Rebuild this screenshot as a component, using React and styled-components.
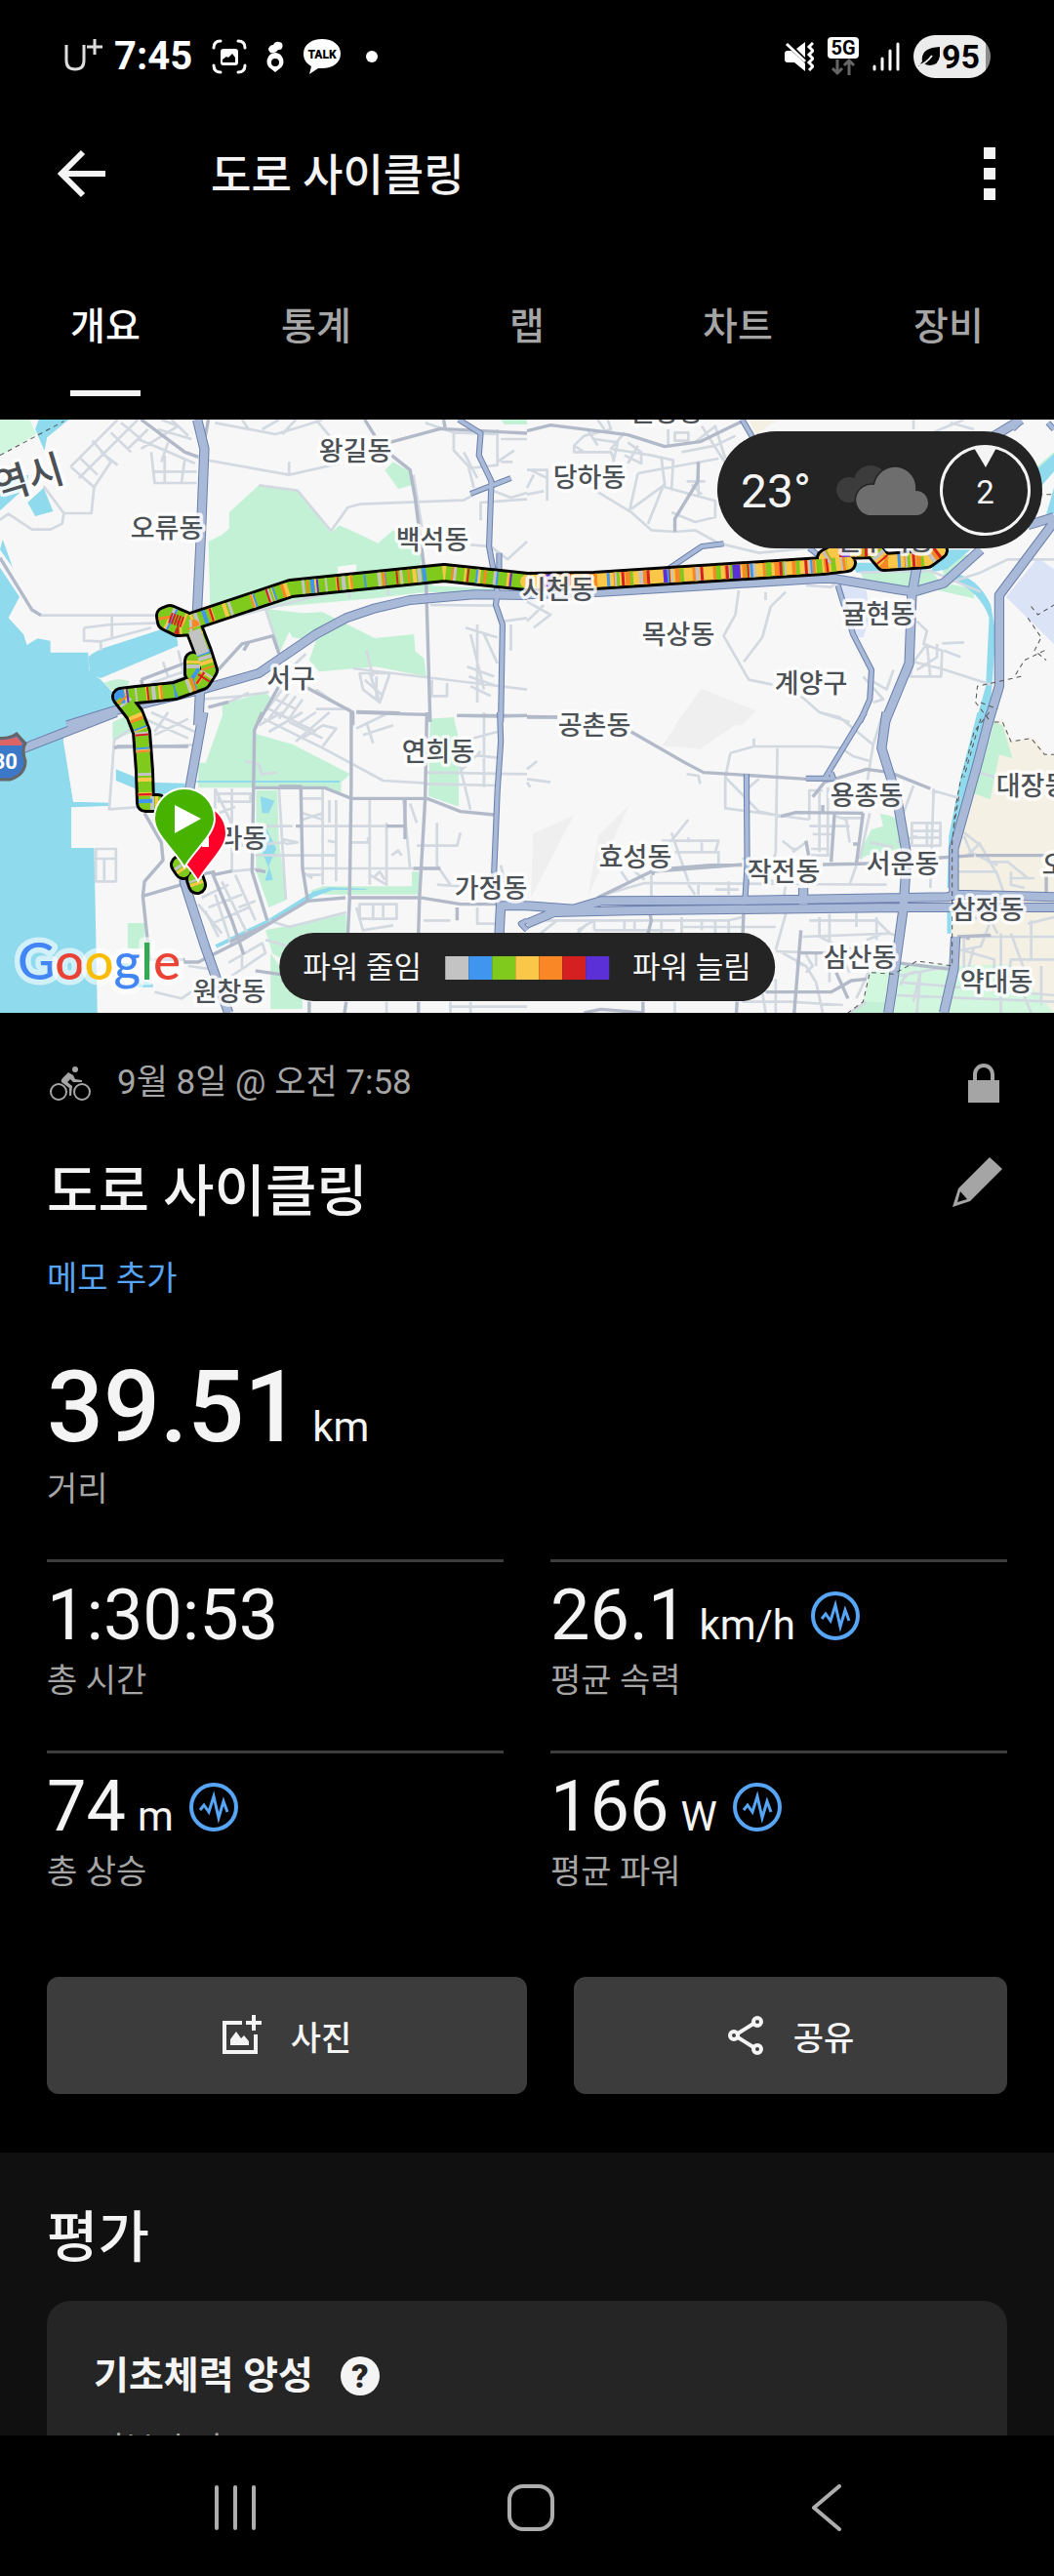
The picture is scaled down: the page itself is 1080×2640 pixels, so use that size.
import React, { useState } from "react";
import styled, { createGlobalStyle } from "styled-components";

const GlobalStyle = createGlobalStyle`
  * {
    box-sizing: border-box;
  }
  body {
    margin: 0;
    background: #000;
    color: #f4f4f4;
    font-family: Roboto, "Noto Sans CJK KR", sans-serif;
  }
  button {
    padding: 0;
    border: none;
    background: none;
    color: inherit;
    font-family: inherit;
  }
  h1, h2, h3, p {
    margin: 0;
    font-weight: 500;
  }
`;

const Screen = styled.div`
  display: flex;
  flex-direction: column;
  height: 100vh;
  background: #000;
`;

const StatusBar = styled.div`
  display: flex;
  justify-content: space-between;
  align-items: center;
  flex: none;
  height: 116px;
  padding: 0 65px;
`;

const StatusGroup = styled.div`
  display: flex;
  align-items: center;
  gap: ${props => props.gap}px;
`;

const Clock = styled.span`
  font-size: 40px;
  font-weight: 700;
  line-height: 48px;
  color: #fff;
`;

const NetworkBadge = styled.div`
  display: flex;
  flex-direction: column;
  align-items: center;
  width: 32px;
  height: 40px;
`;

const NetworkName = styled.span`
  width: 32px;
  border-radius: 4px;
  background: #fff;
  color: #000;
  font-size: 20px;
  font-weight: 700;
  line-height: 22px;
  text-align: center;
`;

const Battery = styled.div`
  display: flex;
  align-items: center;
  justify-content: center;
  gap: 2px;
  width: 79px;
  height: 44px;
  padding-right: 6px;
  border-radius: 22px;
  background: linear-gradient(90deg, #ececec 94%, #8c8c8c 94%);
  color: #000;
  font-size: 34px;
  font-weight: 700;
`;

const AppBar = styled.header`
  display: flex;
  align-items: center;
  flex: none;
  height: 124px;
  padding: 0 54px 0 48px;
`;

const IconButton = styled.button`
  display: flex;
  align-items: center;
  justify-content: center;
  flex: none;
  height: ${props => props.height || 72}px;
  width: ${props => props.width || 72}px;
`;

const AppTitle = styled.h1`
  flex: 1;
  margin-left: 96px;
  padding-top: 6px;
  font-size: 45px;
  line-height: 60px;
`;

const TabBar = styled.nav`
  display: flex;
  flex: none;
  height: 190px;
`;

const Tab = styled.button`
  flex: 1;
  display: flex;
  justify-content: center;
  align-items: flex-start;
  padding-top: 68px;
  color: ${props => (props.$active ? "#fff" : "#a5a5a5")};
  font-size: 39px;
  font-weight: 500;
  line-height: 54px;
`;

const TabLabel = styled.span`
  padding-bottom: 38px;
  border-bottom: 6px solid ${props => (props.$active ? "#f4f4f4" : "transparent")};
`;

const Content = styled.main`
  flex: 1;
  min-height: 0;
  overflow-y: auto;
  scrollbar-width: none;
`;

const MapBox = styled.div`
  position: relative;
  height: 608px;
  overflow: hidden;
`;

const MapSvg = styled.svg`
  display: block;
  width: 100%;
  height: 100%;
`;

const Weather = styled.div`
  position: absolute;
  top: 12px;
  right: 12px;
  display: flex;
  align-items: center;
  height: 120px;
  padding: 0 12px 0 24px;
  border-radius: 60px;
  background: #242424;
`;

const Temperature = styled.span`
  width: 96px;
  padding-top: 4px;
  font-size: 48px;
  line-height: 60px;
`;

const Wind = styled.div`
  position: relative;
  display: flex;
  align-items: center;
  justify-content: center;
  width: 93px;
  height: 93px;
  margin-left: 12px;
  padding-top: 4px;
  border: 3px solid #f4f4f4;
  border-radius: 50%;
  font-size: 33px;
`;

const WindArrow = styled.svg`
  position: absolute;
  top: 0;
  left: 32px;
`;

const Legend = styled.div`
  position: absolute;
  bottom: 12px;
  left: 50%;
  transform: translateX(-50%);
  display: flex;
  align-items: center;
  gap: 24px;
  height: 70px;
  padding: 2px 24px 0;
  border-radius: 35px;
  background: #242424;
  font-size: 31px;
  line-height: 42px;
  white-space: nowrap;
`;

const Swatches = styled.div`
  display: flex;
`;

const Swatch = styled.span`
  width: 24px;
  height: 24px;
  background: ${props => props.color};
`;

const Details = styled.section`
  padding: 48px 48px 60px;
`;

const Row = styled.div`
  display: flex;
  align-items: center;
  gap: 24px;
`;

const DateText = styled.span`
  flex: 1;
  color: #a5a5a5;
  font-size: 35px;
  line-height: 48px;
`;

const TitleRow = styled.div`
  display: flex;
  justify-content: space-between;
  align-items: flex-start;
  margin-top: 52px;
`;

const Title = styled.h2`
  font-size: 57px;
  line-height: 72px;
`;

const MemoLink = styled.a`
  display: block;
  width: max-content;
  margin-top: 28px;
  color: #57a5f5;
  font-size: 34px;
  line-height: 48px;
  text-decoration: none;
`;

const Distance = styled.p`
  display: flex;
  align-items: baseline;
  gap: 12px;
  margin-top: 48px;
  font-size: 102px;
  line-height: 120px;
`;

const Unit = styled.span`
  font-size: 42px;
  font-weight: 400;
  line-height: 48px;
`;

const Label = styled.p`
  color: #a5a5a5;
  font-size: 34px;
  font-weight: 400;
  line-height: 48px;
`;

const StatGrid = styled.div`
  display: grid;
  grid-template-columns: 1fr 1fr;
  gap: 48px;
  margin-top: 48px;
`;

const Stat = styled.div`
  padding-top: 13px;
  border-top: 3px solid #3c3c3c;
`;

const StatRow = styled.div`
  display: flex;
  align-items: center;
  gap: 16px;
`;

const StatValue = styled.span`
  display: flex;
  align-items: baseline;
  gap: 12px;
  font-size: 72px;
  line-height: 84px;
`;

const Actions = styled.div`
  display: grid;
  grid-template-columns: 41fr 37fr;
  gap: 48px;
  margin-top: 84px;
`;

const ActionButton = styled.button`
  display: flex;
  align-items: center;
  justify-content: center;
  gap: 28px;
  height: 120px;
  border-radius: 12px;
  background: #3c3c3c;
  font-size: 34px;
  font-weight: 500;
`;

const Evaluation = styled.section`
  padding: 52px 48px 48px;
  background: #101010;
`;

const Card = styled.div`
  margin-top: 28px;
  padding: 50px 48px;
  border-radius: 24px;
  background: #252525;
`;

const CardTitle = styled.h3`
  font-size: 39px;
  font-weight: 700;
  line-height: 54px;
`;

const HelpButton = styled.button`
  width: 40px;
  height: 40px;
  margin-left: 4px;
  border-radius: 50%;
  background: #f4f4f4;
  color: #252525;
  font-size: 34px;
  font-weight: 900;
  line-height: 40px;
`;

const CardLabel = styled(Label)`
  margin-top: 24px;
`;

const NavBar = styled.nav`
  display: flex;
  flex: none;
  height: 144px;
  padding: 4px 82px 0 90px;
`;

const NavButton = styled.button`
  flex: 1;
  display: flex;
  align-items: center;
  justify-content: center;
`;

/* ---------- map data ---------- */

// The map is drawn in four tiles, each with its own grid.
const tiles = {
  tl: "translate(0 -10) scale(.3444 .3333)",
  tr: "translate(540 -10) scale(.3444 .3333)",
  bl: "translate(0 300) scale(.3444 .3333)",
  br: "translate(540 300) scale(.3444 .3333)",
};

const land = [
  ["tl", "#d2f7df", "M0 30H88L108 75 0 140Z"],
  ["tl", "#90daee", "M115 30H205L140 85 132 125 105 60ZM0 215L85 200 80 235 0 310ZM82 285L130 240 158 312 105 327ZM8 398L38 485 0 430ZM0 485L58 575 25 640 70 690 80 723 112 703 150 710V746H262L265 800 300 830 345 880 340 930 200 970H0Z"],
  ["tl", "#90daee", "M262 760Q290 735 330 725L480 675 525 690 530 725 300 825 268 812Z"],
  ["tl", "#c3f1d5", "M770 232L885 248 985 378 1010 355 1085 390 1125 410 1170 370 1260 440 1240 520 1290 540 1270 560 1110 580 780 610 625 600 620 405 660 385 682 365V315ZM1145 185L1170 160 1218 190 1225 232 1185 243ZM1490 30H1568V45H1500ZM310 840Q350 820 385 835L375 860 330 860ZM660 905L790 868 805 885 760 970H665ZM790 612L900 625 960 622 1115 702 1232 690 1235 742 1262 765 1268 820 1118 790 950 805 920 770 940 710 870 700 860 680 880 640 830 750ZM1268 540L1470 550V570L1268 560ZM1280 950H1350V970H1280Z"],
  ["tl", "#f7f7f7", "M1005 482L1060 475V510H1005ZM1088 370H1160L1125 408Z"],
  ["tr", "#f5f0e4", "M660 30H750L680 75Z"],
  ["tr", "#dbe3f7", "M920 535L1010 555 1020 640 1000 700H970ZM1425 575L1520 455 1568 490V720Z"],
  ["tr", "#c3f1d5", "M990 490H1200L1230 530 1330 550V580L1200 550H1010ZM1230 455L1350 440 1280 510 1240 510ZM1500 190L1568 130V150L1520 200Z"],
  ["tr", "#90daee", "M965 470H1080L1200 480 1180 500 980 500ZM1568 135V190L1530 235 1500 200ZM1230 430H1320L1250 490 1200 500ZM1545 320L1568 240V320ZM1260 500Q1340 510 1380 600L1395 690 1375 960H1335L1365 850 1375 640Q1350 560 1260 520Z"],
  ["tr", "#efefef", "M518 857L682 925 640 970H440Z"],
  ["bl", "#90daee", "M0 0H340L188 75 218 275 325 278V288L212 295V415H280L290 924H0ZM345 175L440 215 550 218V245L450 255 345 210V280Z"],
  ["bl", "#f7f7f7", "M188 85L330 30V275L218 275ZM212 292L330 288 430 300 500 430 540 570 640 924H290V417H212Z"],
  ["bl", "#c3f1d5", "M335 30L400 0V60L335 85ZM665 0H785L757 60V65L870 98 1042 190 1015 215V250L965 232H590V155H612ZM762 240H825L830 400 855 575 800 600 762 490ZM1280 20L1350 15 1365 80V290L1275 258ZM920 550L960 535H1225V490H1248V560H970ZM380 648H430V700H450V726H380ZM790 670L1030 620V680H900L840 760 810 740ZM805 740L900 880V912H805Z"],
  ["bl", "#90daee", "M585 210H1010V216H585ZM775 258L817 272 800 310H780ZM790 350L822 420 800 470 812 515 788 518 800 480 776 420ZM400 820L455 835V845H410ZM360 770L400 775V785H370Z"],
  ["bl", "#90daee", "M640 715L800 635 930 552 980 538 1090 542V546L990 546 935 568 810 645 645 725Z"],
  ["br", "#efefef", "M470 0H675L515 113 402 103ZM18 372L138 318 12 570ZM212 378L303 286 182 565Z"],
  ["br", "#f5f0e4", "M1410 20L1440 90 1510 80 1545 130H1568V924H1320L1265 780 1270 400 1330 250 1390 30Z"],
  ["br", "#d2f7df", "M1020 800L1120 770 1265 780 1440 775 1568 924H975L1000 890Z"],
  ["br", "#c3f1d5", "M1050 312L1080 318 1105 330 1110 420 1010 440 990 455 1000 410 1025 360 1060 350ZM1390 30L1415 40 1445 142 1405 130 1378 268 1330 250ZM1000 890L1070 892V924H970Z"],
  ["br", "#90daee", "M1340 0H1365L1310 240 1265 400V540H1250L1255 380 1290 200ZM1250 600H1262V680H1250Z"],
];

const minor = {
  tl: "M210 175L280 238 272 318H190L130 235M190 318L185 350 150 368H95L25 320 0 338M210 175L350 30M235 210L410 30M275 95L330 160 280 238M240 150L290 200M300 130L350 170M330 70L390 130M440 60L380 120M360 40L420 90M410 90L480 120 580 165M450 130L460 225H585M460 190H585M490 140V225M550 150L540 225M500 100L480 160M420 120L530 50M530 50L480 30M470 60L570 90M510 30L560 80M640 40L820 75 900 50 960 30M720 30L740 60M780 60L830 30M840 75L880 30M940 30L980 80M590 150L860 200 1010 165M860 200V160M770 232L885 248 985 372 1035 300 1070 290 1380 278 1410 260M1230 200L1255 360M1120 80L1170 140M1265 40L1350 70 1480 75M1350 70V125L1400 180M1480 60V170L1395 180 1410 240M1380 130L1420 210M1480 160L1530 125M1490 90H1568M1490 160H1525M1470 250L1520 270 1568 255M1430 340V285L1568 275M1280 600L1470 602M1400 415L1460 420 1510 460 1568 405M250 670L330 660 480 655M250 670V710L300 712 450 670M333 630V700M120 632H480M300 712V740M610 660L790 612 990 560M790 612L830 740M530 740L555 850M485 775L500 820M430 860L620 800M450 840L560 800M600 890L720 880 800 868M620 915L690 895 740 870M840 860L780 940M860 870L800 950M880 880L830 950M900 890L860 950M820 890L880 920M800 920L860 950M940 920H1040M940 860L1010 910M1050 795L1568 860M1090 740L1110 820M1070 810H1160L1130 900 1080 860ZM1085 830L1140 880M1100 810L1130 900M1120 820V890M1385 670L1480 700M1400 690L1440 860M1420 660V900M1440 690L1480 780M1390 790L1470 820M1395 820L1480 850M1400 850L1460 880M1285 830V880H1330V840M1520 660V740M1500 650L1568 640M1040 560V580M1155 550V570M910 750L860 800",
  tr: "M140 110L170 80 250 60 240 30M170 130L140 110V130H250L260 160M200 90L270 100 250 190M210 30L230 60M180 60L210 110M290 70L250 120 370 140 435 155 430 250M300 100L340 130V165L290 140M330 110L300 165M420 60V110M440 70H480V95H440ZM400 150L410 230 310 305M500 100L560 50 590 150M520 50L600 180M460 130L560 110 620 80M330 195L570 150M330 195L305 310M405 235L360 350M400 235L560 280V330L500 345 430 315M190 240L310 315 370 370 440 375 500 370 570 410 690 440 840 425M475 220H530M510 165V270M490 230L520 260M0 185L60 185V280M0 260L50 250M20 200L0 240M10 185L60 210M0 590L70 630 20 670M0 650L50 600M630 555L620 630 585 695 660 830 730 845M815 880L870 930 960 960M770 560L725 605 700 700 645 775M710 560V585M830 540L905 545 920 530M1160 650L1190 680 1180 720 1235 740 1232 820H1140L1150 775 1230 795 1380 845M1190 720L1150 775M1235 718L1300 715M1240 740L1290 760M1190 720L1200 820M1220 720V760L1160 800M1000 820L1060 890 1030 900M1020 830L1070 860 1090 800M990 500L1200 495 1350 560M1200 550L1350 500 1430 460 1568 460M1150 60V30M1160 90L1230 60 1300 30M1260 40L1330 60",
  bl: "M340 85L325 298 430 290M340 85L400 45M335 110L580 100M430 20L560 80M450 0L580 60M460 70L560 20M500 0L460 60M640 235L720 410 850 400M640 235V340M650 250H745V275H650ZM690 235V490M600 330L700 290M680 490L780 480M760 350H870M760 440H1000M830 235L850 575M960 235V530M895 265L960 265M895 350H1200M895 440H960M900 480L1310 480M1000 270V520M1100 265V530M1150 340V530L1100 500M1200 265L1220 480M980 270V340M1040 400H1095V385M840 390L885 400 850 405M900 310L960 330M900 330L960 310M975 395L1000 400M900 500H955M905 495L930 510M1165 440L1185 425 1195 440M1110 510L1130 490 1145 515M785 20L960 110 1140 210 1270 218M770 40L840 0M800 60L900 0M880 40L940 0M900 80L960 40 1000 50 960 105M880 90L980 0M860 30L960 80M820 0L940 60M1060 50L1160 0M1080 70L1170 40M1090 30L1110 95M730 150L770 160 780 190 825 185M1270 185L1568 190M1270 220L1480 225M1360 130L1400 300M1400 130L1480 140M1440 0V230M1370 90L1480 60M1370 180L1430 120M1220 280L1240 340M1240 410H1360L1370 370M1300 340V470L1340 530M1300 530L1440 540M1490 470L1510 560M285 420H345V520H285ZM285 450H345M310 450V520M600 570L680 530M620 600L720 560M630 650L740 600M590 590L660 680M660 520L740 690M700 500L760 640M680 770L780 710 790 740 690 810M790 700L860 720 850 760M720 740V790M460 860L540 880 640 810M630 790L560 780M1070 590H1180V635H1070ZM1110 590V640M1140 590V630M1060 600L1080 670 1170 655M1260 640H1340M1420 600V650H1480M800 640L860 660 1030 615M920 924V890M1150 924V890M1340 924V890M1400 890V924M1340 905H1568M710 600L760 580M640 560L690 720M610 610L650 690",
  br: "M0 175L30 150M0 205L70 215M0 215L10 230M475 190L510 195 515 220M605 125L675 105H870L935 110 970 135 1020 150M605 125L590 200V295L700 310 840 330M590 200L690 305 760 320M745 110L740 430 730 480M675 105V80M870 0L930 15 1030 100 1005 260M1030 100L1060 0M690 205L650 240M760 395L790 420 810 420M790 430L830 400M480 330L430 395 410 400M430 370L480 520M400 395H570L560 430H460M440 430H570V480M520 400V430M480 385V400M640 450H720M740 430L720 500M280 490L300 520M310 480L350 515M230 560L350 525 1070 530M510 525V560M480 530L500 560M370 500V590M560 545H630M600 520V560M700 510L770 530 760 590M840 330V240L880 240M870 235V430M895 230V440M840 350H960M850 375H910M845 420H900M845 440H900M920 320L950 330 960 400M930 325H1000M1020 310L990 450M960 530L980 470M1020 400L1090 415M1150 225L1120 310M1210 235L1200 540M1205 240L1290 265M1145 340H1230V410H1145ZM1145 365H1230M1145 385H1230M1190 340V410M1100 400L1160 380M1300 370L1350 410 1400 500 1420 560M1300 380L1320 430 1400 470M1350 400L1310 440M1280 490L1400 490M1370 460H1430L1490 510M1440 490V530L1480 540M1440 510H1510M0 640H60L160 640H600L640 630M40 680L90 640M150 670L200 640V670M180 650L150 680M200 670H440M290 640V670M320 640V670M400 640V680M460 630V680M460 660H740M520 635V670M560 640V680M600 640V680M740 600L770 620 740 730M870 630V690L910 710M820 690L1080 680 1110 690M900 620V830M980 610V660M840 640H1040L1080 680M1040 630V700M1060 680L1010 700M740 735L880 740 1000 720M690 790V830M640 890H800M740 820V924M760 740L830 780 860 830 880 924M830 745L850 780 830 800M860 740V780M930 740L960 800M800 770L830 780M440 890V924M700 860L710 924M780 890L940 900M960 924L1010 890M1020 790L980 880M1110 810L1260 780M1110 830L1568 870M1100 870L1568 890M1110 840Q1130 790 1170 800L1150 890M1290 690H1568M1300 690V790M1320 630L1380 640 1350 720 1300 730M1380 640L1400 680M1290 730L1390 760 1390 790M1410 680V924M1440 680L1500 850M1500 640V760H1440L1430 830M1490 650L1568 630M1530 780V900M1480 760L1568 760M1330 720L1310 800M1470 850L1500 924M1335 180L1390 200M1170 800L1160 924",
};

const arterial = {
  tl: "M420 30L550 130 590 145M1085 30L1115 80M1160 100L1310 58 1568 72M1165 140L1220 185 1235 270 1255 430 1268 540 1280 960M0 455L95 615 122 632M620 30L600 140M640 810L720 720 812 695 830 750M420 830L560 775M420 830L430 870M620 915L680 898M725 740L740 715M830 850L770 960M905 850L1050 930V970M1060 928L1190 932M1190 935L1275 937M1360 940H1568M1320 30L1325 60",
  tr: "M0 65L70 47 300 77 410 113 515 98 640 35M510 160L508 220 440 335V375M0 943L90 945",
  bl: "M430 310L480 400 485 455 430 520 425 565 540 530M425 565L445 760H550M545 768H590L720 700 915 580 1028 570M780 0L757 55 750 490 795 640M757 232H965L1045 265H1270L1370 305 1470 315M830 228H895L900 480 915 575M1045 0V220L1040 580 1035 680M1060 0L1190 5M1360 10L1480 12 1568 10M1270 0L1265 265 1248 570 1245 680M1040 570H1250L1370 590 1490 590M1205 265V390M1150 350H1205M880 350H895M340 110L350 105 560 105M630 490L690 640 725 745M540 510L640 490M635 500L690 488M685 705L800 650M760 795L860 810 840 830M920 890V924M1030 890L1025 924M1245 890V924M1360 600V640M760 485L790 490M1230 480H1310M0 924",
  br: "M0 15H90M310 60L470 155 525 185 830 205 920 210M850 260L885 215 1010 175 1080 185 1200 235M755 320L800 308 1000 310M1000 310L980 465M915 310L905 460M830 395L838 440M880 285V310M970 405H985M360 590L370 640 360 680M645 600L642 680M375 500V480M430 480L545 470H640M545 470H640M210 570L370 490 640 468M880 468L1020 465M1190 450L1330 440M1335 440H1568M1545 500V560M1280 690L1380 685M1312 690V700M1100 770L1260 790M710 860H905L965 825 1010 820M815 670L795 924M920 800L955 880M810 740H880M345 890V924M625 890L623 924M0 924M170 924L220 913 345 924",
};

const highwayWide = {
  tl: "M587 30L608 120 598 380 585 650M595 870L590 970M200 970L340 925 600 860 770 810 940 690 1030 640 1110 612 1220 585 1410 568 1568 570",
  tr: "M0 568L220 560 540 540 880 518 920 520 1100 552 1150 560 1240 533 1350 430M1160 480L1145 570 1137 780 1065 960M1568 345L1405 570V850L1370 970M1490 355L1568 330M1390 80L1470 30",
  bl: "M605 0L565 230 555 400 548 520 560 560 610 720 680 924M60 115L345 0M1490 590L1485 690M1490 595H1568",
  br: "M0 595L140 605 220 580 650 578 1250 568 1280 560 1568 568M0 650L80 615 300 610 1110 600H1568M1070 0L1055 110 1100 260 1130 440 1120 600 1085 860 1075 924M1380 0L1340 160 1270 420V560M1275 690L1270 790 1240 924M822 540V590",
};

const highwayThin = {
  tl: "M1365 30L1430 72 1425 140 1462 220 1455 420 1480 560 1475 600 1495 660 1490 960M1400 258L1520 210M1485 440V500",
  tr: "M640 30L680 100 720 200M420 490L520 420 585 412M840 425L870 450M925 540L970 690 1025 800 1020 890 990 960M1445 60L1470 35M1550 40L1568 60",
  bl: "M1487 0L1490 90 1480 240 1470 490 1485 600M1568 640L1550 650 1568 670",
  br: "M1005 0L885 205M830 203H915M653 190L655 470 648 590M905 185L912 205",
};

const borders = {
  tl: "M0 140L190 35",
  tr: "M1500 605L1520 630 1568 600M1490 640L1530 700 1510 740 1545 770M1540 740L1480 770 1450 820M1470 820L1340 850 1335 900 1380 960M1350 900L1400 920M1560 260H1520",
  br: "M1375 0L1330 60 1310 140 1290 210 1275 290 1265 400V780L1235 775 1160 765 1090 805 1020 800 1000 890 955 924M1350 20L1330 90 1300 200M1390 30L1415 30 1440 90 1500 80 1540 130H1568M1285 260L1270 350",
};

const places = [
  ["왕길동", 364, 41], ["오류동", 171, 120], ["백석동", 443, 132], ["서구", 298, 274],
  ["당하동", 604, 68], ["시천동", 572, 183], ["목상동", 695, 229], ["귤현동", 900, 208],
  ["계양구", 831, 279], ["공촌동", 609, 322], ["연희동", 449, 349], ["청라동", 236, 438],
  ["가정동", 503, 489], ["원창동", 235, 595], ["효성동", 651, 457], ["작전동", 803, 472],
  ["용종동", 888, 394], ["서운동", 925, 464], ["대장동", 1058, 384], ["오정동", 1105, 465],
  ["삼정동", 1012, 511], ["삼산동", 881, 560], ["약대동", 1021, 585], ["원당동", 683, 1],
  ["선주지동", 907, 133],
];

const westRoute =
  "M202 477L200 471M188 462L184 456M162 393H149L148 360 145 320 138 302 124 284 140 282 179 278 207 268 214 257 208 238 198 212 182 213 170 207 169 201 174 199 190 206M198 247L198 260 207 266M196 207L298 173 455 157 540 166";
const eastRoute =
  "M540 166L609 165 843 150 868 147M846 142L860 134 895 133 906 146 950 143 962 134";

const westStripes = [
  ["#fbc748", "3 19 2 11 4 27"],
  ["#c3c3c3", "2 15 4 33 3 21"],
  ["#4096ee", "2 37 4 51 2 19"],
  ["#f98726", "2 31 3 23 2 43"],
  ["#d42020", "2 71 2 59"],
  ["#5b30d6", "2 197"],
];
const eastStripes = [
  ["#80ca1d", "5 11 4 17 6 9"],
  ["#f98726", "3 9 5 13 4 17"],
  ["#c3c3c3", "2 23 4 29"],
  ["#d42020", "3 19 2 31 3 23"],
  ["#5b30d6", "4 67 8 113"],
  ["#4096ee", "3 59 2 83"],
];

const powerColors = ["#c3c3c3", "#4096ee", "#80ca1d", "#fbc748", "#f98726", "#d42020", "#5b30d6"];

const Roads = ({ paths, color, width }) => (
  <g fill="none" stroke={color} strokeWidth={width} strokeLinejoin="round">
    {Object.keys(paths).map(key => (
      <path key={key} d={paths[key]} transform={tiles[key]} />
    ))}
  </g>
);

const Route = ({ d, base, stripes }) => (
  <g fill="none" strokeWidth="14" strokeLinejoin="round">
    <path d={d} stroke={base} strokeLinecap="round" />
    {stripes.map(([color, dash], i) => (
      <path key={color} d={d} stroke={color} strokeDasharray={dash} strokeDashoffset={i * 13} />
    ))}
  </g>
);

const RouteMap = () => (
  <MapSvg viewBox="0 0 1080 608" preserveAspectRatio="xMidYMid slice" role="img" aria-label="지도">
    <rect width="1080" height="608" fill="#f7f7f7" />
    {land.map(([tile, color, d], i) => (
      <path key={i} d={d} fill={color} transform={tiles[tile]} />
    ))}
    <Roads paths={minor} color="#d3d9e1" width="8" />
    <Roads paths={arterial} color="#b2bac9" width="10" />
    <Roads paths={highwayThin} color="#6c80ad" width="18" />
    <Roads paths={highwayWide} color="#6c80ad" width="30" />
    <Roads paths={highwayThin} color="#a9b9d8" width="12" />
    <Roads paths={highwayWide} color="#a9b9d8" width="24" />
    <g strokeDasharray="14 12">
      <Roads paths={borders} color="#555" width="3" />
    </g>

    <g fill="none" stroke="#000" strokeWidth="20" strokeLinejoin="round" strokeLinecap="round">
      <path d={westRoute} />
      <path d={eastRoute} />
    </g>
    <Route d={westRoute} base="#80ca1d" stripes={westStripes} />
    <Route d={eastRoute} base="#fbc748" stripes={eastStripes} />
    <path d="M199 216L208 240" stroke="#c3c3c3" strokeWidth="13" />
    <path d="M174 203L188 208" stroke="#d42020" strokeWidth="11" strokeDasharray="2 1" />

    <g
      fontFamily='"Noto Sans CJK KR", sans-serif'
      fontSize="27"
      fontWeight="500"
      fill="#4c5156"
      stroke="#fff"
      strokeOpacity=".85"
      strokeWidth="7"
      strokeLinejoin="round"
      paintOrder="stroke"
      textAnchor="middle"
    >
      {places.map(([name, x, y]) => (
        <text key={name} x={x} y={y + 1}>{name}</text>
      ))}
      <text x="29" y="74" fontSize="40" transform="rotate(-17 29 60)">역시</text>
    </g>

    <path d="M-30 326Q-20 330-10 324 5 330 17 322L26 332Q22 338 26 350 26 364 10 369H-30Z" fill="#3c78c8" stroke="#666" strokeWidth="3" />
    <path d="M-30 328Q-20 332-10 326 5 331 17 325L23 332 22 334H-30Z" fill="#dc6464" />
    <text x="-1" y="358" fontSize="22" fontWeight="700" fill="#fff" textAnchor="middle">130</text>

    <path d="M203 473C194 456 171 440 171 424A30 30 0 0 1 232 424C232 440 212 456 203 473Z" fill="#ff0029" stroke="#fff" strokeWidth="2" />
    <path d="M207 430V438H214V428" fill="#fff" />
    <path d="M189 459C180 442 158 426 158 409A31 31 0 0 1 220 409C220 426 198 442 189 459Z" fill="#47b300" stroke="#fff" strokeWidth="2" />
    <path d="M179 395L206 409 179 424Z" fill="#fff" />

    <text
      x="18"
      y="574"
      fontFamily="Lato, sans-serif"
      fontSize="53"
      fontWeight="500"
      stroke="#fff"
      strokeOpacity=".6"
      strokeWidth="11"
      strokeLinejoin="round"
      paintOrder="stroke"
    >
      <tspan fill="#4285f4">G</tspan>
      <tspan fill="#ea4335">o</tspan>
      <tspan fill="#fbbc05">o</tspan>
      <tspan fill="#4285f4">g</tspan>
      <tspan fill="#34a853">l</tspan>
      <tspan fill="#ea4335">e</tspan>
    </text>
  </MapSvg>
);

/* ---------- icons ---------- */

const CarrierIcon = () => (
  <svg width="40" height="36" fill="none" stroke="#ddd" strokeWidth="3">
    <path d="M3 6V22Q3 31 12 31T21 22V6M32 0V16M24 8H40" />
  </svg>
);

const CaptureIcon = () => (
  <svg width="36" height="36" fill="none" stroke="#fff" strokeWidth="3" strokeLinecap="round">
    <path d="M2 9Q2 2 9 2M27 2Q34 2 34 9M34 27Q34 34 27 34M9 34Q2 34 2 27" />
    <rect x="9" y="10" width="18" height="17" rx="3" fill="#fff" stroke="none" />
    <path d="M11 24V21L15 18 17 19 21 15 24 19V24Z" fill="#000" stroke="none" />
  </svg>
);

const BeanIcon = () => (
  <svg width="18" height="32" fill="#fff">
    <path fillRule="evenodd" d="M9 12A9 9 0 0 1 14 28L9 32 4 28A9 9 0 0 1 9 12ZM9 18A4 4 0 1 0 9 26 4 4 0 0 0 9 18Z" />
    <path d="M2 9A5 5 0 0 1 7 4Q9 0 13 1A4 4 0 0 1 12 9Q9 13 4 12Z" />
  </svg>
);

const TalkIcon = () => (
  <svg width="38" height="36">
    <path d="M19 0C8 0 0 6 0 15 0 21 3 25 8 28L6 36 15 30H19C30 30 38 24 38 15S30 0 19 0Z" fill="#fff" />
    <text x="19" y="20" fontSize="12" fontWeight="900" textAnchor="middle" fill="#000">TALK</text>
  </svg>
);

const MuteIcon = () => (
  <svg width="30" height="30" fill="#fff">
    <path d="M0 12Q0 9 3 9H7L21 22V30L10 21H3Q0 21 0 18ZM12 7L21 0V16Z" />
    <path d="M2 2L21 20M29 1L25 5 29 9 25 13 29 17 25 21 29 25 25 29" fill="none" stroke="#fff" strokeWidth="3" />
  </svg>
);

const ArrowsIcon = () => (
  <svg width="26" height="18" fill="none" stroke="#666" strokeWidth="3">
    <path d="M7 1V15M2 10L7 15 12 10M19 17V3M14 7L19 2 24 7" />
  </svg>
);

const SignalIcon = () => (
  <svg width="28" height="30" fill="none" stroke="#fff" strokeWidth="3" strokeLinecap="round">
    <path d="M2 25V28M10 17V28M18 9V28M26 2V28" />
  </svg>
);

const LeafIcon = () => (
  <svg width="22" height="22" fill="#000">
    <path d="M22 1Q24 20 12 20 8 20 6 18L0 21 4 16Q2 2 22 1Z" />
    <path d="M1 20Q8 18 14 10" fill="none" stroke="#ececec" strokeWidth="2" />
  </svg>
);

const BackArrow = () => (
  <svg width="50" height="50" fill="none" stroke="#f4f4f4" strokeWidth="6">
    <path d="M49 25H5M26 3L4 25 26 47" />
  </svg>
);

const MoreIcon = () => (
  <svg width="12" height="54" fill="#f4f4f4">
    <path d="M0 0H12V12H0ZM0 21H12V33H0ZM0 42H12V54H0Z" />
  </svg>
);

const CloudIcon = () => (
  <svg width="96" height="54">
    <g fill="#3c3c3c">
      <circle cx="37" cy="19" r="17" />
      <circle cx="15" cy="27" r="13" />
    </g>
    <path
      d="M35 53A15 15 0 1 1 41 22 21 21 0 0 1 83 28 12 12 0 0 1 84 53Z"
      fill="#6e6e6e"
      stroke="#242424"
      strokeWidth="3"
      paintOrder="stroke"
    />
  </svg>
);

const BikeIcon = () => (
  <svg width="48" height="48" fill="#a5a5a5">
    <g fill="none" stroke="#a5a5a5" strokeWidth="2">
      <circle cx="12" cy="33" r="8" />
      <circle cx="36" cy="33" r="8" />
    </g>
    <circle cx="29" cy="10" r="3" />
    <path d="M22 13L27 16 29 20 36 21V23H27L24 20 21 23 26 27 25 37H23V29L15 23Q14 21 16 19Z" />
  </svg>
);

const LockIcon = () => (
  <svg width="48" height="48" fill="#a5a5a5">
    <rect x="8" y="21" width="32" height="23" />
    <path d="M15 21V15A9 9 0 0 1 33 15V21" fill="none" stroke="#a5a5a5" strokeWidth="4" />
  </svg>
);

const PencilIcon = () => (
  <svg width="52" height="52" fill="#a5a5a5">
    <path fillRule="evenodd" d="M38 0L51 12 18 45 0 51 6 32ZM8 35L5 46 15 43Z" />
  </svg>
);

const PulseIcon = () => (
  <svg width="51" height="51" viewBox="0 0 51 51" fill="none" stroke="#57a5f5">
    <circle cx="25" cy="25" r="23" strokeWidth="4" />
    <path d="M11 28L15 23 20 30 25 14 30 36 35 19 39 30" strokeWidth="3" />
  </svg>
);

const PhotoIcon = () => (
  <svg width="42" height="42" fill="none" stroke="#f4f4f4" strokeWidth="4">
    <path d="M20 8H2V38H34V20M32 0V16M24 8H40" />
    <path d="M8 31V25L14 17 19 24 22 21 27 27V31Z" fill="#f4f4f4" stroke="none" />
  </svg>
);

const ShareIcon = () => (
  <svg width="40" height="42" fill="none" stroke="#f4f4f4" strokeWidth="4">
    <circle cx="7" cy="21" r="4" />
    <circle cx="31" cy="7" r="4" />
    <circle cx="31" cy="35" r="4" />
    <path d="M11 19L27 9M11 23L27 33" />
  </svg>
);

const tabs = ["개요", "통계", "랩", "차트", "장비"];

const stats = [
  { label: "총 시간", value: "1:30:53" },
  { label: "평균 속력", value: "26.1", unit: "km/h" },
  { label: "총 상승", value: "74", unit: "m" },
  { label: "평균 파워", value: "166", unit: "W" },
];

const App = () => {
  const [active, setActive] = useState("개요");

  return (
    <Screen>
      <GlobalStyle />
      <StatusBar>
        <StatusGroup gap={20}>
          <StatusGroup gap={12}>
            <CarrierIcon />
            <Clock>7:45</Clock>
          </StatusGroup>
          <CaptureIcon />
          <BeanIcon />
          <TalkIcon />
          <svg width="36" height="12">
            <circle cx="12" cy="6" r="6" fill="#fff" />
          </svg>
        </StatusGroup>
        <StatusGroup gap={14}>
          <MuteIcon />
          <NetworkBadge>
            <NetworkName>5G</NetworkName>
            <ArrowsIcon />
          </NetworkBadge>
          <SignalIcon />
          <Battery>
            <LeafIcon />95
          </Battery>
        </StatusGroup>
      </StatusBar>

      <AppBar>
        <IconButton aria-label="뒤로">
          <BackArrow />
        </IconButton>
        <AppTitle>도로 사이클링</AppTitle>
        <IconButton width={24} aria-label="메뉴">
          <MoreIcon />
        </IconButton>
      </AppBar>

      <TabBar>
        {tabs.map(tab => (
          <Tab key={tab} $active={tab === active} onClick={() => setActive(tab)}>
            <TabLabel $active={tab === active}>{tab}</TabLabel>
          </Tab>
        ))}
      </TabBar>

      <Content>
        <MapBox>
          <RouteMap />
          <Weather>
            <Temperature>23°</Temperature>
            <CloudIcon />
            <Wind>
              <WindArrow width="24" height="20">
                <path d="M0 0H23L12 20Z" fill="#f4f4f4" />
              </WindArrow>
              2
            </Wind>
          </Weather>
          <Legend>
            <span>파워 줄임</span>
            <Swatches>
              {powerColors.map(color => (
                <Swatch key={color} color={color} />
              ))}
            </Swatches>
            <span>파워 늘림</span>
          </Legend>
        </MapBox>

        <Details>
          <Row>
            <BikeIcon />
            <DateText>9월 8일 @ 오전 7:58</DateText>
            <LockIcon />
          </Row>
          <TitleRow>
            <Title>도로 사이클링</Title>
            <IconButton width={60} height={52} aria-label="편집">
              <PencilIcon />
            </IconButton>
          </TitleRow>
          <MemoLink href="#memo">메모 추가</MemoLink>

          <Distance>
            39.51
            <Unit>km</Unit>
          </Distance>
          <Label>거리</Label>

          <StatGrid>
            {stats.map(stat => (
              <Stat key={stat.label}>
                <StatRow>
                  <StatValue>
                    {stat.value}
                    {stat.unit && <Unit>{stat.unit}</Unit>}
                  </StatValue>
                  {stat.unit && <PulseIcon />}
                </StatRow>
                <Label>{stat.label}</Label>
              </Stat>
            ))}
          </StatGrid>

          <Actions>
            <ActionButton>
              <PhotoIcon />
              사진
            </ActionButton>
            <ActionButton>
              <ShareIcon />
              공유
            </ActionButton>
          </Actions>
        </Details>

        <Evaluation>
          <Title>평가</Title>
          <Card>
            <Row>
              <CardTitle>기초체력 양성</CardTitle>
              <HelpButton aria-label="도움말">?</HelpButton>
            </Row>
            <CardLabel>기본 효과</CardLabel>
          </Card>
        </Evaluation>
      </Content>

      <NavBar>
        <NavButton aria-label="최근 앱">
          <svg width="44" height="48" fill="none" stroke="#adadad" strokeWidth="4" strokeLinecap="round">
            <path d="M3 3V45M22 3V45M41 3V45" />
          </svg>
        </NavButton>
        <NavButton aria-label="홈">
          <svg width="48" height="48" fill="none" stroke="#adadad" strokeWidth="4">
            <rect x="2" y="2" width="44" height="44" rx="14" />
          </svg>
        </NavButton>
        <NavButton aria-label="이전">
          <svg width="32" height="48" fill="none" stroke="#adadad" strokeWidth="4" strokeLinecap="round" strokeLinejoin="round">
            <path d="M29 2L3 24 29 46" />
          </svg>
        </NavButton>
      </NavBar>
    </Screen>
  );
};

export default App;
